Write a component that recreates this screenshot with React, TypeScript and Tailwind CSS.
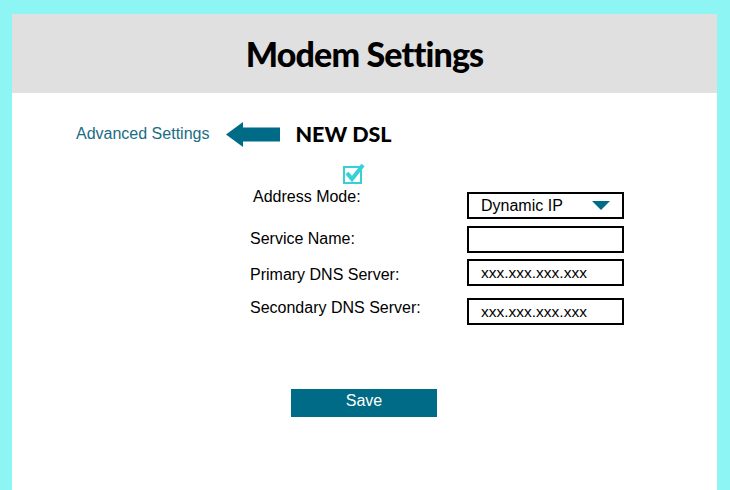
export default function App() {
  const f = { fontFamily: '"Liberation Sans", Arial, sans-serif' };
  const box = "w-[157px] h-[27px] border-2 border-black flex items-center px-3 text-[15.5px] text-black";
  return (
    <div className="w-[730px] h-[490px] bg-[#8ef5f5] pt-[14px] pl-[12px] overflow-hidden" style={f}>
      <div className="w-[705px] h-[476px] bg-white flex flex-col">
        <div className="h-[79px] bg-[#e0e0e0] flex items-center justify-center">
          <span className="text-[34px] font-black text-black tracking-tight" style={{ fontFamily: 'Lato, sans-serif' }}>Modem Settings</span>
        </div>
        <div className="flex items-center mt-[28px] h-[26px]">
          <span className="ml-[64px] text-[16px] text-[#1a6c85]">Advanced Settings</span>
          <svg className="ml-[17px]" width="54" height="25" viewBox="0 0 54 25">
            <path d="M0 12.5 L17 0 V5.5 H54 V19.5 H17 V25 Z" fill="#006b86" />
          </svg>
          <span className="ml-[15px] text-[21.5px] font-black text-black" style={{ fontFamily: 'Lato, sans-serif' }}>NEW DSL</span>
        </div>
        <div className="ml-[331px] mt-[19px] w-[19px] h-[18px] border-2 border-[#36d0d8] relative">
          <svg className="absolute -top-[5px] left-0" width="20" height="20" viewBox="0 0 20 20">
            <path d="M2 10 L7 16 L18 2" stroke="#36d0d8" strokeWidth="4" fill="none" />
          </svg>
        </div>
        <div className="flex ml-[238px]">
          <div className="w-[217px] text-[16px] text-black">
            <div className="ml-[3px] mt-[1px] h-[42px]">Address Mode:</div>
            <div className="h-[36px]">Service Name:</div>
            <div className="h-[33px]">Primary DNS Server:</div>
            <div>Secondary DNS Server:</div>
          </div>
          <div className="flex flex-col mt-[8px]">
            <div className={box + " justify-between"}>
              <span className="text-[16px]">Dynamic IP</span>
              <svg width="18" height="9" viewBox="0 0 18 9"><path d="M0 0 H18 L9 9 Z" fill="#006b86" /></svg>
            </div>
            <div className={box + " mt-[7px]"}></div>
            <div className={box + " mt-[6px]"}>xxx.xxx.xxx.xxx</div>
            <div className={box + " mt-[12px]"}>xxx.xxx.xxx.xxx</div>
          </div>
        </div>
        <div className="ml-[279px] mt-[64px] w-[146px] h-[28px] bg-[#006b86] text-white text-[16px] flex items-center justify-center pb-[4px]">Save</div>
      </div>
    </div>
  );
}
